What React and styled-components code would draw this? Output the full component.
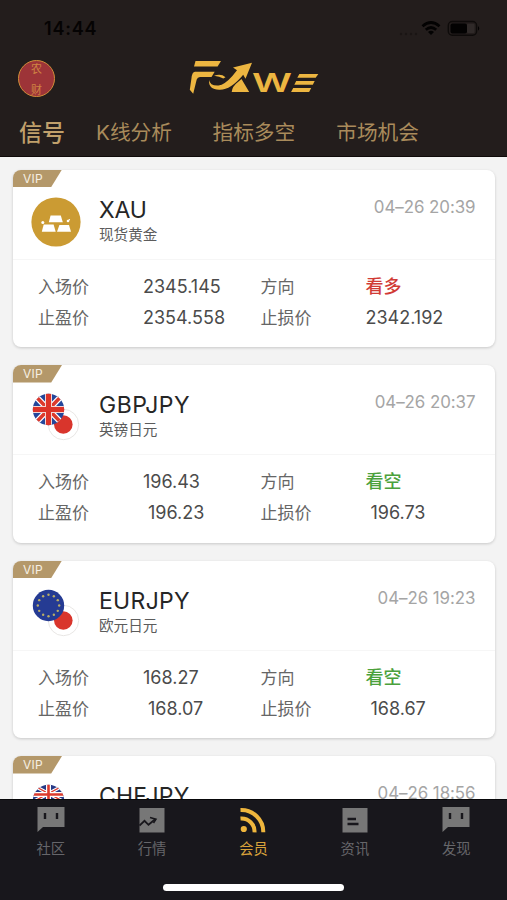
import { useId } from "react";
import styled, { createGlobalStyle } from "styled-components";

const GlobalStyle = createGlobalStyle`
  * {
    box-sizing: border-box;
  }

  body {
    margin: 0;
    background: #f3f3f3;
    font-family: Inter, "Noto Sans CJK SC", sans-serif;
  }
`;

const Screen = styled.div`
  display: flex;
  flex-direction: column;
  width: 507px;
  height: 900px;
  overflow: hidden;
  background: #f3f3f3;
`;

const Header = styled.header`
  display: flex;
  flex-direction: column;
  flex: none;
  height: 157px;
  background: #231d1c;
  border-bottom: 1px solid #0f0a09;
`;

const StatusBar = styled.div`
  display: flex;
  align-items: center;
  justify-content: space-between;
  height: 57px;
  padding: 0 26px 0 44px;
`;

const Clock = styled.span`
  font-size: 18px;
  font-weight: 600;
  letter-spacing: 0.8px;
  color: #050303;
`;

const Brand = styled.div`
  display: grid;
  grid-template-columns: 1fr auto 1fr;
  align-items: center;
  height: 42px;
  padding: 0 18px;
`;

const Avatar = styled.div`
  display: flex;
  flex-direction: column;
  align-items: center;
  justify-content: space-between;
  width: 37px;
  height: 37px;
  padding: 1px 0;
  border: 1.5px solid #d08e39;
  border-radius: 50%;
  background: #9d3438;
  color: #cf8443;
  font-family: "Noto Sans CJK SC", serif;
  font-size: 11px;
  line-height: 12px;
`;

const Tabs = styled.nav`
  display: flex;
  align-items: center;
  height: 57px;
  padding: 11px 0 0 19px;
`;

const Tab = styled.span`
  margin-right: ${(props) => props.$gap}px;
  font-size: ${(props) => (props.$active ? "23px" : "20.7px")};
  font-weight: ${(props) => (props.$active ? 500 : 400)};
  line-height: 30px;
  white-space: nowrap;
  color: ${(props) => (props.$active ? "#c0a06b" : "#a98b5b")};
`;

const List = styled.main`
  flex: 1;
  min-height: 0;
  padding: 12.5px 12.5px 0 13px;
  overflow: hidden;
`;

const Card = styled.article`
  position: relative;
  height: 177.5px;
  margin-bottom: 18px;
  border-radius: 8px;
  background: #fff;
  box-shadow: 0 1px 3px rgba(0, 0, 0, 0.18);
`;

const VipBadge = styled.div`
  position: absolute;
  top: 0;
  left: 0;
  width: 49px;
  height: 17.5px;
  padding-left: 10px;
  border-top-left-radius: 8px;
  background: #b4986a;
  clip-path: polygon(0 0, 100% 0, 78% 100%, 0 100%);
  color: #f6efe3;
  font-size: 12px;
  line-height: 17.5px;
  letter-spacing: 0.3px;
`;

const CardTop = styled.div`
  display: flex;
  height: 90px;
  padding: 27px 19px 0 18px;
  border-bottom: 1px solid #f6f6f6;
`;

const Pair = styled.div`
  flex: 1;
  padding-left: 18px;
`;

const Symbol = styled.h2`
  margin: -1px 0 1px;
  font-size: 23px;
  font-weight: 400;
  line-height: 28px;
  letter-spacing: ${(props) => props.$spacing || 0}px;
  color: #262626;
`;

const PairName = styled.div`
  font-size: 14.6px;
  line-height: 21px;
  color: #5c5c5c;
`;

const Time = styled.time`
  margin-top: -1px;
  font-size: 16.9px;
  line-height: 22px;
  letter-spacing: -0.05px;
  color: #a5a5a5;
`;

const Quotes = styled.div`
  display: grid;
  grid-template-columns: 105px 117.5px 105px 1fr;
  grid-auto-rows: 31px;
  align-items: center;
  padding: 11.5px 0 0 25px;
`;

const Label = styled.span`
  font-size: 17px;
  line-height: 24px;
  color: #666;
`;

const Value = styled.span`
  padding-left: ${(props) => (props.$indent ? "5px" : 0)};
  font-size: 18px;
  line-height: 24px;
  color: #4b4b4b;
`;

const Direction = styled.span`
  font-size: 18px;
  font-weight: 500;
  line-height: 24px;
  color: ${(props) => (props.$up ? "#d13b36" : "#4ba13c")};
`;

const BottomNav = styled.footer`
  display: flex;
  flex-direction: column;
  align-items: center;
  flex: none;
  height: 101px;
  background: #18171c;
  border-top: 1px solid #08080a;
`;

const NavItems = styled.div`
  display: grid;
  grid-template-columns: repeat(5, 1fr);
  width: 100%;
  height: 84px;
`;

const NavItem = styled.div`
  display: flex;
  flex-direction: column;
  align-items: center;
  padding-top: 6px;
  font-size: 14.3px;
  line-height: 20px;
  color: ${(props) => (props.$active ? "#d8a23b" : "#66666a")};

  svg {
    margin-bottom: 6px;
  }
`;

const HomeIndicator = styled.div`
  width: 181px;
  height: 6.5px;
  border-radius: 4px;
  background: #fff;
`;

const StatusIcons = () => (
  <svg width="84" height="20" viewBox="0 0 84 20">
    <g fill="#1b1615">
      <circle cx="4" cy="15" r="1.2" />
      <circle cx="9" cy="15" r="1.2" />
      <circle cx="14" cy="15" r="1.2" />
      <circle cx="19" cy="15" r="1.2" />
    </g>
    <g fill="none" stroke="#030202" strokeWidth="2.8">
      <path d="M25.5 7.2 Q34 -0.2 42.5 7.2" />
      <path d="M28.8 10.7 Q34 6.3 39.2 10.7" />
    </g>
    <path d="M31 13 Q34 10.7 37 13 L34 16.1Z" fill="#030202" />
    <rect x="51.3" y="2.5" width="28.3" height="13.8" rx="4" fill="none" stroke="#0e0b0a" strokeWidth="1.4" />
    <rect x="70" y="4.7" width="7.5" height="9.4" rx="1" fill="#302a29" />
    <rect x="53.5" y="4.4" width="16.5" height="10" rx="2" fill="#030202" />
    <path d="M81 6.9 Q83.5 9.3 81 11.7Z" fill="#030202" />
  </svg>
);

const Logo = () => (
  <svg width="130" height="42" viewBox="0 -3 130 42">
    <g fill="#edb641">
      <path d="M6.5 1H32L28.6 6.5H5Z" />
      <path d="M6 11.8H25.7L22.5 17H11Q8.5 17 7.7 19.5L4.2 33.8L0.8 29.8L2.4 18.8Q3 11.8 6 11.8Z" />
      <path d="M20 20Q21 26 29.5 25.5Q35.5 25 43.6 15.8L48 10.2L44 7.6L63 2.7L56.5 18.8L54.2 14.8Q41.3 30.4 30.2 29.8Q19.3 29.5 20 20Z" />
      <path d="M48.7 22.2L52.5 19L60.2 32H42.7Q43.1 26.4 48.7 22.2Z" />
      <path d="M25 15.8Q32 13.2 36.5 17.2L34.3 18.6Q30.5 16.3 25 15.8Z" />
      <path d="M110.4 14H129.3L126.7 17.8H108.3Z" />
      <path d="M107.2 21.1H125.7L123.8 24.8H105.3Z" />
      <path d="M104.2 28.1H122.2L120.1 32H102.1Z" />
    </g>
    <text
      x="63"
      y="32"
      fill="#edb641"
      fontFamily="Inter, sans-serif"
      fontSize="25"
      fontWeight="600"
      textLength="40"
      lengthAdjust="spacingAndGlyphs"
    >
      W
    </text>
  </svg>
);

const GoldIcon = () => (
  <svg width="50" height="50" viewBox="0 0 50 50">
    <circle cx="25" cy="25" r="24.6" fill="#cb9b33" />
    <g fill="#fff">
      <path d="M19.6 18.4H29.8L31.8 25.2H17.8Z" />
      <path d="M12.7 27.4H22.6L24.7 34.8H10.8Z" />
      <path d="M28.4 28H38L40 34.8H26Z" />
      <circle cx="11.8" cy="25.4" r="1.5" />
      <circle cx="37" cy="24" r="1.3" />
      <circle cx="38.3" cy="22.8" r="0.8" />
    </g>
  </svg>
);

const UnionJack = () => (
  <>
    <rect x="1" y="0" width="32" height="34" fill="#24469a" />
    <path d="M1 0L33 33M33 0L1 33" stroke="#fff" strokeWidth="6" />
    <path d="M1 0L33 33M33 0L1 33" stroke="#dc3a2d" strokeWidth="3.6" />
    <path d="M17 0V34M0 16.5H34" stroke="#f3d5d3" strokeWidth="7" />
    <path d="M17 0V34M0 16.5H34" stroke="#dc3328" strokeWidth="5" />
  </>
);

const Europe = () => (
  <>
    <rect width="34" height="34" fill="#253b93" />
    {Array.from({ length: 12 }, (_, i) => {
      const angle = (i * Math.PI) / 6;
      return (
        <circle
          key={i}
          cx={17 + Math.sin(angle) * 10.7}
          cy={16.5 - Math.cos(angle) * 10.7}
          r="1.2"
          fill="#b9ad67"
        />
      );
    })}
  </>
);

// union jack in the upper half of a navy disc
const SmallUnionJack = () => (
  <>
    <rect width="34" height="34" fill="#263a87" />
    <path d="M3 2L31 17M31 2L3 17" stroke="#fff" strokeWidth="3.5" />
    <path d="M3 2L31 17M31 2L3 17" stroke="#dc3a2d" strokeWidth="1.4" />
    <path d="M17 0V17M1 10.5H33" stroke="#fff" strokeWidth="5" />
    <path d="M17 0V17M1 10.5H33" stroke="#dc3a2d" strokeWidth="2.6" />
  </>
);

const flags = {
  GBP: UnionJack,
  EUR: Europe,
  CHF: SmallUnionJack,
};

const FlagPair = ({ base }) => {
  const id = useId();
  const Flag = flags[base];

  return (
    <svg width="50" height="50" viewBox="0 0 50 50">
      <circle cx="32.5" cy="32.5" r="15.2" fill="#fff" stroke="#e5e3e1" strokeWidth="0.9" />
      <circle cx="32.3" cy="32.5" r="9.3" fill="#d9352c" />
      <clipPath id={id}>
        <circle cx="17.5" cy="17.5" r="15.7" />
      </clipPath>
      <g clipPath={`url(#${id})`}>
        <g transform="translate(0.5 1)">
          <Flag />
        </g>
      </g>
    </svg>
  );
};

const ChatIcon = () => (
  <svg width="28" height="27" viewBox="0 0 28 27">
    <path d="M0.5 1H27.5V21H6L0.5 26Z" fill="#777" />
    <path d="M8 7V13M20 7V13" stroke="#18171c" strokeWidth="2.4" />
  </svg>
);

const MarketIcon = () => (
  <svg width="26" height="27" viewBox="0 0 26 27">
    <rect x="0.5" y="2" width="25" height="24.5" fill="#777" />
    <path d="M0.5 19.5L5.5 14.8L9.5 18.8L16.5 13" fill="none" stroke="#18171c" strokeWidth="1.8" />
    <path d="M11 11.5L17 13.3L14.5 17" fill="none" stroke="#18171c" strokeWidth="1.5" />
  </svg>
);

const SignalIcon = () => (
  <svg width="26" height="27" viewBox="0 0 26 27">
    <circle cx="3.8" cy="23" r="3.1" fill="#efb63d" />
    <path d="M0.5 12.5A13 13 0 0 1 14.5 26.3M0.5 4A22 22 0 0 1 23.3 26.3" fill="none" stroke="#efb63d" strokeWidth="4" />
  </svg>
);

const NewsIcon = () => (
  <svg width="26" height="27" viewBox="0 0 26 27">
    <rect x="0.5" y="2" width="25" height="24.5" fill="#777" />
    <path d="M5.5 13H14M5.5 18H16.5" stroke="#18171c" strokeWidth="2.4" />
  </svg>
);

const tabs = [
  { text: "信号", gap: 31, active: true },
  { text: "K线分析", gap: 40.5 },
  { text: "指标多空", gap: 41 },
  { text: "市场机会", gap: 0 },
];

const signals = [
  { symbol: "XAU", name: "现货黄金", time: "04–26 20:39", entry: "2345.145", profit: "2354.558", stop: "2342.192", up: true, spacing: -0.2 },
  { symbol: "GBPJPY", name: "英镑日元", time: "04–26 20:37", entry: "196.43", profit: "196.23", stop: "196.73", indent: true, spacing: 0.5 },
  { symbol: "EURJPY", name: "欧元日元", time: "04–26 19:23", entry: "168.27", profit: "168.07", stop: "168.67", indent: true, spacing: 0.3 },
  { symbol: "CHFJPY", time: "04–26 18:56", spacing: 0.2 },
];

const navItems = [
  { text: "社区", Icon: ChatIcon },
  { text: "行情", Icon: MarketIcon },
  { text: "会员", Icon: SignalIcon, active: true },
  { text: "资讯", Icon: NewsIcon },
  { text: "发现", Icon: ChatIcon },
];

const SignalCard = ({ signal }) => (
  <Card>
    <VipBadge>VIP</VipBadge>
    <CardTop>
      {signal.symbol === "XAU" ? <GoldIcon /> : <FlagPair base={signal.symbol.slice(0, 3)} />}
      <Pair>
        <Symbol $spacing={signal.spacing}>{signal.symbol}</Symbol>
        {signal.name && <PairName>{signal.name}</PairName>}
      </Pair>
      <Time>{signal.time}</Time>
    </CardTop>
    {signal.entry && (
      <Quotes>
        <Label>入场价</Label>
        <Value>{signal.entry}</Value>
        <Label>方向</Label>
        <Direction $up={signal.up}>{signal.up ? "看多" : "看空"}</Direction>
        <Label>止盈价</Label>
        <Value $indent={signal.indent}>{signal.profit}</Value>
        <Label>止损价</Label>
        <Value $indent={signal.indent}>{signal.stop}</Value>
      </Quotes>
    )}
  </Card>
);

const App = () => {
  return (
    <>
      <GlobalStyle />
      <Screen>
        <Header>
          <StatusBar>
            <Clock>14:44</Clock>
            <StatusIcons />
          </StatusBar>
          <Brand>
            <Avatar>
              <span>农</span>
              <span>财</span>
            </Avatar>
            <Logo />
          </Brand>
          <Tabs>
            {tabs.map((tab) => (
              <Tab key={tab.text} $active={tab.active} $gap={tab.gap}>{tab.text}</Tab>
            ))}
          </Tabs>
        </Header>
        <List>
          {signals.map((signal) => (
            <SignalCard key={signal.symbol} signal={signal} />
          ))}
        </List>
        <BottomNav>
          <NavItems>
            {navItems.map(({ text, Icon, active }) => (
              <NavItem key={text} $active={active}>
                <Icon />
                {text}
              </NavItem>
            ))}
          </NavItems>
          <HomeIndicator />
        </BottomNav>
      </Screen>
    </>
  );
};

export default App;
